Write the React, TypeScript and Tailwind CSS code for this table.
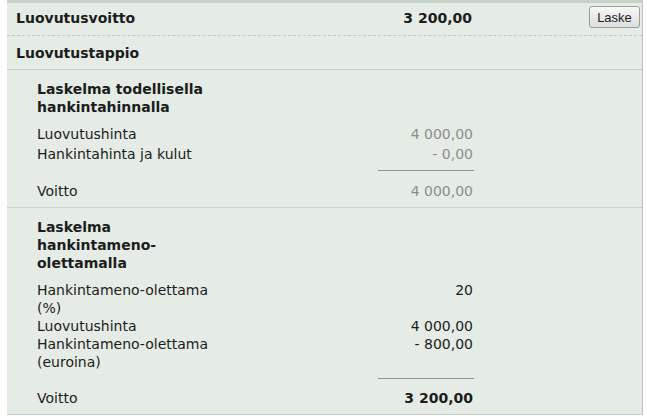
import React from "react"

type Line = { label: string; value: string }

function CalcRow({ label, value, muted, bold }: Line & { muted?: boolean; bold?: boolean }) {
  return (
    <div className="flex w-[436px] leading-[18px]">
      <div className="w-[185px]">{label}</div>
      <div
        className={`ml-auto w-[95px] text-right ${muted ? "text-[#8c8c8c]" : "text-[#1c1c1c]"} ${
          bold ? "font-bold" : ""
        }`}
      >
        {value}
      </div>
    </div>
  )
}

function Section({
  title,
  rows,
  total,
  muted,
}: {
  title: string
  rows: Line[]
  total: string
  muted?: boolean
}) {
  return (
    <div className="border-b border-[#c8cfc8] pt-[10px] pb-[7px] pl-[30px]">
      <h3 className="w-[185px] font-bold leading-[18px]">{title}</h3>
      <div className={`mt-[9px] flex flex-col ${muted ? "gap-[2px]" : ""}`}>
        {rows.map((r) => (
          <CalcRow key={r.label} {...r} muted={muted} />
        ))}
      </div>
      <div className="mt-[7px] flex w-[437px]">
        <div className="ml-auto h-px w-[96px] bg-[#8e978e]" />
      </div>
      <div className={muted ? "mt-[11px]" : "mt-[10px]"}>
        <CalcRow label="Voitto" value={total} muted={muted} bold={!muted} />
      </div>
    </div>
  )
}

export default function App() {
  return (
    <div className="min-h-screen bg-white font-['DejaVu_Sans',sans-serif] text-[14px] text-[#1c1c1c]">
      <div className="ml-[7px] w-[636px] border-t-[3px] border-r border-[#c9d2c9] border-r-[#b9c1b9] bg-[#e5ece5]">
        <div className="flex h-[33px] items-start border-b border-dashed border-[#c3cac3] pt-[3px] pl-[9px] pr-[2px]">
          <div className="mt-[3px] flex w-[456px] leading-[18px]">
            <span className="font-bold">Luovutusvoitto</span>
            <span className="ml-auto font-bold">3 200,00</span>
          </div>
          <button className="ml-auto h-[22px] w-[51px] rounded-[3px] border border-[#9b9b9b] bg-gradient-to-b from-[#f8f8f8] to-[#dcdcdc] font-['Liberation_Sans',sans-serif] text-[13px] leading-none text-[#222]">
            Laske
          </button>
        </div>
        <div className="h-[34px] border-b border-[#c8cfc8] pt-[8px] pl-[9px] leading-[18px] font-bold">
          Luovutustappio
        </div>
        <Section
          title="Laskelma todellisella hankintahinnalla"
          rows={[
            { label: "Luovutushinta", value: "4 000,00" },
            { label: "Hankintahinta ja kulut", value: "- 0,00" },
          ]}
          total="4 000,00"
          muted
        />
        <Section
          title="Laskelma hankintameno-olettamalla"
          rows={[
            { label: "Hankintameno-olettama (%)", value: "20" },
            { label: "Luovutushinta", value: "4 000,00" },
            { label: "Hankintameno-olettama (euroina)", value: "- 800,00" },
          ]}
          total="3 200,00"
        />
      </div>
    </div>
  )
}
